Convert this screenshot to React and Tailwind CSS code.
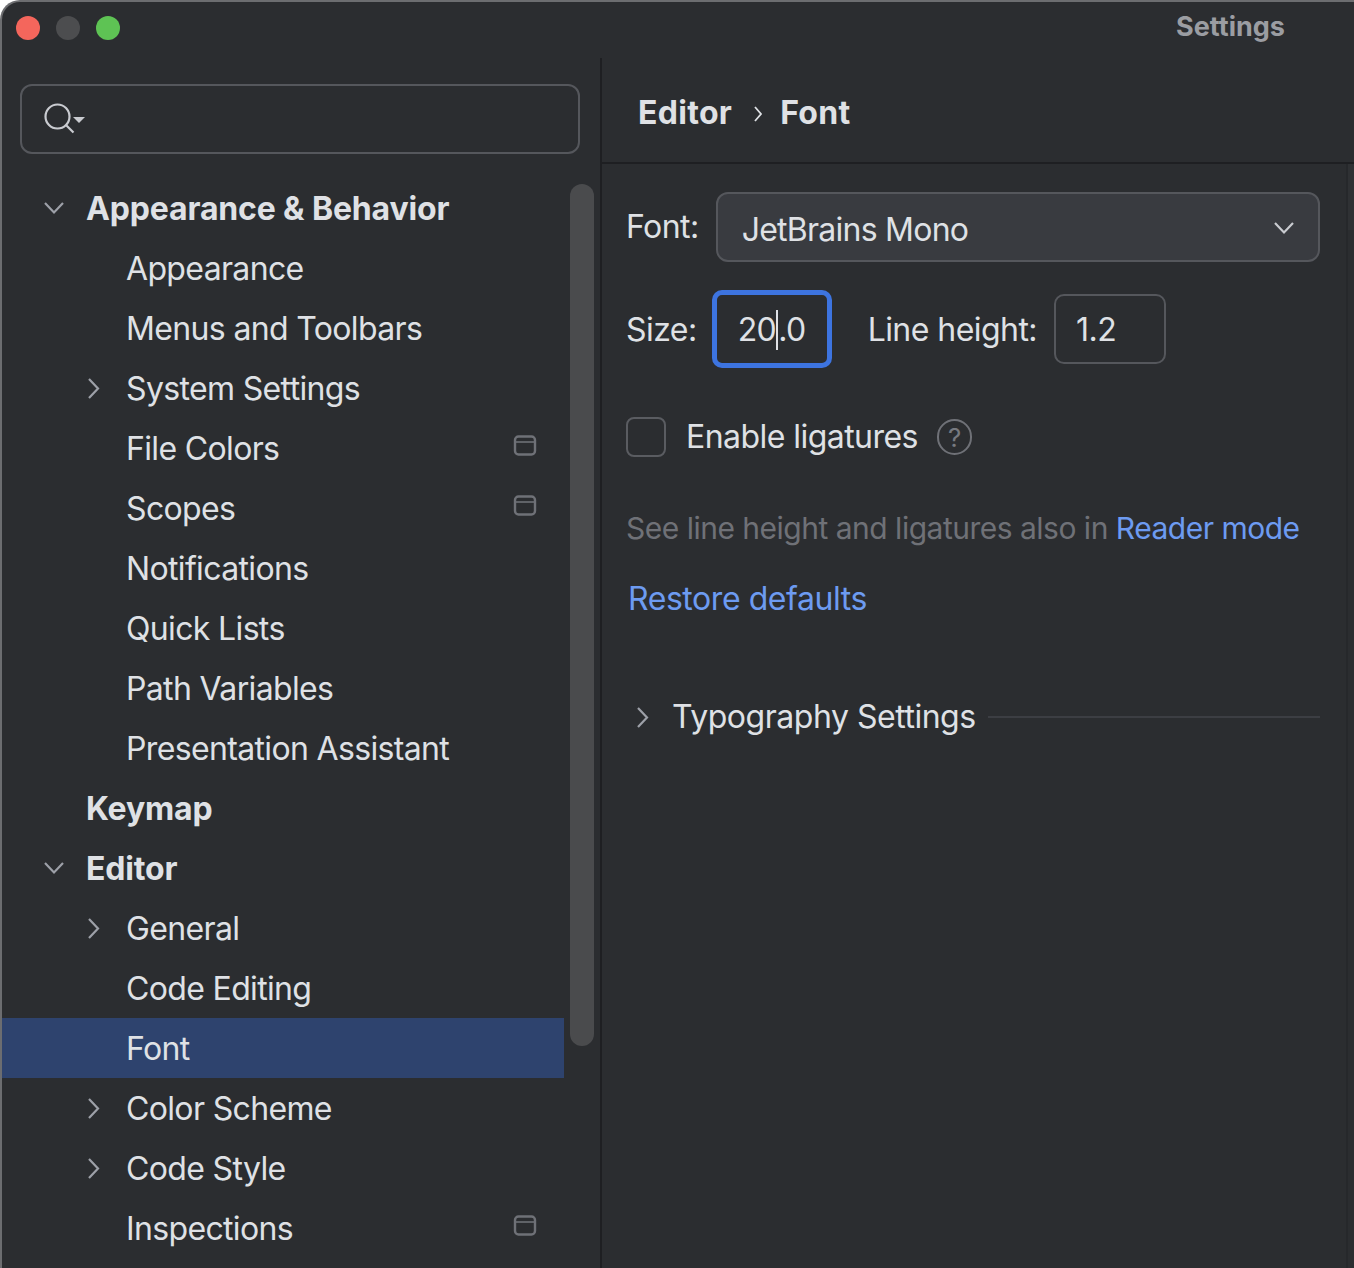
const tree = [
  { label: "Appearance & Behavior", level: 0, arrow: "down" },
  { label: "Appearance", level: 1 },
  { label: "Menus and Toolbars", level: 1 },
  { label: "System Settings", level: 1, arrow: "right" },
  { label: "File Colors", level: 1, project: true },
  { label: "Scopes", level: 1, project: true },
  { label: "Notifications", level: 1 },
  { label: "Quick Lists", level: 1 },
  { label: "Path Variables", level: 1 },
  { label: "Presentation Assistant", level: 1 },
  { label: "Keymap", level: 0 },
  { label: "Editor", level: 0, arrow: "down" },
  { label: "General", level: 1, arrow: "right" },
  { label: "Code Editing", level: 1 },
  { label: "Font", level: 1, selected: true },
  { label: "Color Scheme", level: 1, arrow: "right" },
  { label: "Code Style", level: 1, arrow: "right" },
  { label: "Inspections", level: 1, project: true },
];

function ArrowDown({ color = "#9da0a8" }) {
  return (
    <svg width="24" height="14" viewBox="0 0 24 14" fill="none" stroke={color} strokeWidth="2.2" className="shrink-0">
      <path d="M3 2l9 9.5 9-9.5" />
    </svg>
  );
}

function ArrowRight() {
  return (
    <svg width="14" height="23" viewBox="0 0 14 23" fill="none" stroke="#9da0a8" strokeWidth="2.2" className="shrink-0">
      <path d="M2 2l9 9.5-9 9.5" />
    </svg>
  );
}

function ProjectIcon() {
  return (
    <svg width="24" height="22" viewBox="0 0 24 22" fill="none" stroke="#6f7177" strokeWidth="2.4" className="shrink-0">
      <rect x="2" y="1.5" width="20" height="18" rx="3.5" />
      <path d="M2 7h20" strokeWidth="1.6" />
    </svg>
  );
}

function SearchIcon() {
  return (
    <svg width="42" height="32" viewBox="0 0 42 32" fill="none" className="shrink-0">
      <circle cx="13.5" cy="13.5" r="12" stroke="#c9cbd0" strokeWidth="2.2" />
      <path d="M22 22l7.5 7.5" stroke="#c9cbd0" strokeWidth="2.2" />
      <path d="M29 14h12l-6 6z" fill="#c9cbd0" />
    </svg>
  );
}

function TreeRow({ item }) {
  const isTop = item.level === 0;
  return (
    <div className={`flex h-[60px] items-center pr-[27px] ${item.selected ? "bg-[#2e436e]" : ""}`}>
      <div className={`flex w-8 shrink-0 justify-center ${isTop ? "ml-9" : "ml-[76px]"}`}>
        {item.arrow === "down" && <ArrowDown />}
        {item.arrow === "right" && <ArrowRight />}
      </div>
      <span
        className={`ml-4 whitespace-nowrap pt-[2px] text-[32px] text-[#dfe1e5] ${
          isTop ? "font-bold tracking-[-0.15px]" : "tracking-[-0.65px]"
        }`}
      >
        {item.label}
      </span>
      {item.project && (
        <span className="ml-auto -translate-y-[2px]">
          <ProjectIcon />
        </span>
      )}
    </div>
  );
}

export default function App() {
  return (
    <div className="relative flex h-[1268px] w-[1354px] flex-col overflow-hidden rounded-tl-[20px] border-t-2 border-l-2 border-[#6c6d70] bg-[#2b2d30] font-['Inter',sans-serif] text-[#dfe1e5]">
      {/* title bar */}
      <div className="flex h-14 shrink-0 items-center px-[14px] pb-1">
        <div className="flex gap-4">
          <span className="h-6 w-6 rounded-full bg-[#f4665c]" />
          <span className="h-6 w-6 rounded-full bg-[#4c4d4f]" />
          <span className="h-6 w-6 rounded-full bg-[#5ec354]" />
        </div>
        <span className="-mt-[2px] ml-auto mr-[55px] text-[27px] font-bold text-[#9b9da2]">Settings</span>
      </div>

      <div className="flex min-h-0 flex-1">
        {/* left tree */}
        <aside className="relative w-[598px] shrink-0 overflow-hidden">
          <div className="mx-[18px] mt-[26px] flex h-[70px] w-[560px] items-center rounded-[12px] border-2 border-[#55575c] pl-[22px]">
            <SearchIcon />
          </div>
          <div className="mt-6 w-[562px]">
            {tree.map((item) => (
              <TreeRow key={item.label} item={item} />
            ))}
          </div>
          {/* scrollbar thumb */}
          <div className="absolute left-[568px] top-[126px] h-[862px] w-6 rounded-full bg-[#4a4b4d]" />
        </aside>

        {/* right pane */}
        <main className="relative flex min-w-0 flex-1 flex-col border-l-2 border-[#1e1f22]">
          <div className="flex h-[106px] shrink-0 items-center border-b-2 border-[#1e1f22] pl-9 pt-[6px] tracking-[0.3px]">
            <span className="text-[32px] font-bold">Editor</span>
            <svg width="10" height="18" viewBox="0 0 10 18" fill="none" stroke="#dfe1e5" strokeWidth="1.8" className="ml-[21px] mt-[2px]">
              <path d="M2 2l6 7-6 7" />
            </svg>
            <span className="ml-[17px] text-[32px] font-bold">Font</span>
          </div>

          <div className="flex flex-col pl-[24px] pr-[34px] pt-7 tracking-[-0.55px]">
            <div className="flex items-center gap-[17px]">
              <span className="text-[32px]">Font:</span>
              <div className="flex h-[70px] w-[604px] items-center justify-between rounded-[12px] border-2 border-[#55575c] bg-[#393b40] pl-6 pr-[22px]">
                <span className="pt-[6px] text-[32px] tracking-[-0.75px]">JetBrains Mono</span>
                <span className="mt-[2px] flex">
                  <ArrowDown color="#c9cbd0" />
                </span>
              </div>
            </div>

            <div className="mt-[28px] flex items-center">
              <span className="pt-[1px] text-[32px]">Size:</span>
              <div className="ml-[15px] flex h-[78px] w-[120px] items-center rounded-[10px] border-[5px] border-[#3d74e0] pl-[21px] pt-[1px] text-[32px]">
                <span>20</span>
                <span className="h-10 w-[2px] bg-[#dfe1e5]" />
                <span>.0</span>
              </div>
              <span className="ml-9 pt-[1px] text-[32px]">Line height:</span>
              <div className="ml-[17px] flex h-[70px] w-[112px] items-center rounded-[10px] border-2 border-[#55575c] pl-5 pt-[1px] text-[32px]">
                1.2
              </div>
            </div>

            <div className="mt-[45px] flex items-center">
              <span className="h-10 w-10 rounded-[8px] border-2 border-[#5a5c61]" />
              <span className="ml-5 text-[32px]">Enable ligatures</span>
              <span className="ml-[19px] flex h-9 w-[35px] items-center justify-center rounded-full border-2 border-[#6f7177] text-[26px] text-[#777a80]">
                ?
              </span>
            </div>

            <p className="mt-[45px] whitespace-nowrap text-[30px] tracking-[-0.5px] text-[#6f7177]">
              See line height and ligatures also in <span className="text-[#6d9bf1]">Reader mode</span>
            </p>
            <p className="ml-[2px] mt-6 text-[32px] tracking-[-0.44px] text-[#6d9bf1]">Restore defaults</p>

            <div className="mt-[70px] flex items-center">
              <span className="ml-[10px]">
                <ArrowRight />
              </span>
              <span className="ml-[22px] whitespace-nowrap text-[32px] tracking-[-0.47px]">Typography Settings</span>
              <span className="ml-3 h-[2px] flex-1 bg-[#3c3e43]" />
            </div>
          </div>

          {/* right scrollbar track */}
          <div className="absolute right-0 top-[106px] flex h-[1104px] w-2 flex-col border-l-2 border-[#26282b]">
            <div className="h-[66px] bg-[#2f3134]" />
          </div>
        </main>
      </div>
    </div>
  );
}
